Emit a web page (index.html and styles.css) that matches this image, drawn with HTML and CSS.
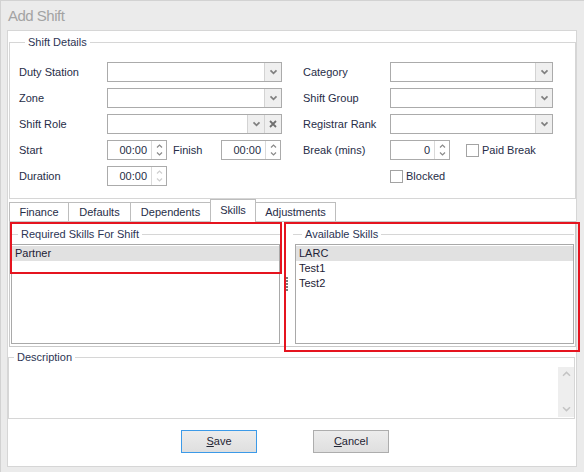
FILE: index.html
```html
<!DOCTYPE html>
<html>
<head>
<meta charset="utf-8">
<title>Add Shift</title>
<link rel="stylesheet" href="styles.css">
</head>
<body>
<div class="window">
  <div class="title">Add Shift</div>
  <div class="panel">
    <fieldset class="details">
      <legend>Shift Details</legend>
      <div class="form">
        <span class="lbl">Duty Station</span>
        <div class="combo"><span class="field"></span><span class="cbtn"><svg width="9" height="6" viewBox="0 0 9 6"><path d="M1.5 1.3L4.5 4.4L7.5 1.3" fill="none" stroke="#808080" stroke-width="1.7"/></svg></span></div>
        <span class="lbl rcol">Category</span>
        <div class="combo"><span class="field"></span><span class="cbtn"><svg width="9" height="6" viewBox="0 0 9 6"><path d="M1.5 1.3L4.5 4.4L7.5 1.3" fill="none" stroke="#808080" stroke-width="1.7"/></svg></span></div>

        <span class="lbl">Zone</span>
        <div class="combo"><span class="field"></span><span class="cbtn"><svg width="9" height="6" viewBox="0 0 9 6"><path d="M1.5 1.3L4.5 4.4L7.5 1.3" fill="none" stroke="#808080" stroke-width="1.7"/></svg></span></div>
        <span class="lbl rcol">Shift Group</span>
        <div class="combo"><span class="field"></span><span class="cbtn"><svg width="9" height="6" viewBox="0 0 9 6"><path d="M1.5 1.3L4.5 4.4L7.5 1.3" fill="none" stroke="#808080" stroke-width="1.7"/></svg></span></div>

        <span class="lbl">Shift Role</span>
        <div class="combo"><span class="field"></span><span class="cbtn"><svg width="9" height="6" viewBox="0 0 9 6"><path d="M1.5 1.3L4.5 4.4L7.5 1.3" fill="none" stroke="#808080" stroke-width="1.7"/></svg></span><span class="cbtn"><svg width="8" height="8" viewBox="0 0 8 8"><path d="M1 1L7 7M7 1L1 7" fill="none" stroke="#707070" stroke-width="1.8"/></svg></span></div>
        <span class="lbl rcol">Registrar Rank</span>
        <div class="combo"><span class="field"></span><span class="cbtn"><svg width="9" height="6" viewBox="0 0 9 6"><path d="M1.5 1.3L4.5 4.4L7.5 1.3" fill="none" stroke="#808080" stroke-width="1.7"/></svg></span></div>

        <span class="lbl">Start</span>
        <div class="pair">
          <div class="spin"><span class="val">00:00</span><span class="arrows"><svg width="7" height="16" viewBox="0 0 7 16"><path d="M1 5.5L3.5 3L6 5.5M1 10.5L3.5 13L6 10.5" fill="none" stroke="#8a8a8a" stroke-width="1.2"/></svg></span></div>
          <span class="lbl finish">Finish</span>
          <div class="spin end"><span class="val">00:00</span><span class="arrows"><svg width="7" height="16" viewBox="0 0 7 16"><path d="M1 5.5L3.5 3L6 5.5M1 10.5L3.5 13L6 10.5" fill="none" stroke="#8a8a8a" stroke-width="1.2"/></svg></span></div>
        </div>
        <span class="lbl rcol">Break (mins)</span>
        <div class="pair">
          <div class="spin"><span class="val">0</span><span class="arrows"><svg width="7" height="16" viewBox="0 0 7 16"><path d="M1 5.5L3.5 3L6 5.5M1 10.5L3.5 13L6 10.5" fill="none" stroke="#8a8a8a" stroke-width="1.2"/></svg></span></div>
          <span class="check paid"></span><span class="lbl chk-text">Paid Break</span>
        </div>

        <span class="lbl">Duration</span>
        <div class="pair">
          <div class="spin"><span class="val">00:00</span><span class="arrows"><svg width="7" height="16" viewBox="0 0 7 16"><path d="M1 5.5L3.5 3L6 5.5M1 10.5L3.5 13L6 10.5" fill="none" stroke="#cfcfcf" stroke-width="1.2"/></svg></span></div>
        </div>
        <div class="pair blocked">
          <span class="check"></span><span class="lbl chk-text">Blocked</span>
        </div>
      </div>
    </fieldset>

    <div class="tabs">
      <span class="tab w-fin">Finance</span>
      <span class="tab w-def">Defaults</span>
      <span class="tab w-dep">Dependents</span>
      <span class="tab w-sk active">Skills</span>
      <span class="tab w-adj">Adjustments</span>
    </div>
    <div class="page">
      <fieldset class="sgroup left">
        <legend>Required Skills For Shift</legend>
        <div class="list">
          <div class="item sel">Partner</div>
        </div>
      </fieldset>
      <div class="splitter"><span class="grip"></span></div>
      <fieldset class="sgroup right">
        <legend>Available Skills</legend>
        <div class="list">
          <div class="item sel">LARC</div>
          <div class="item">Test1</div>
          <div class="item">Test2</div>
        </div>
      </fieldset>
    </div>

    <fieldset class="desc">
      <legend>Description</legend>
      <div class="desc-body">
        <div class="vscroll">
          <svg width="9" height="6" viewBox="0 0 9 6"><path d="M1 4.8L4.5 1.4L8 4.8" fill="none" stroke="#c4c4c4" stroke-width="1.5"/></svg>
          <svg width="9" height="6" viewBox="0 0 9 6"><path d="M1 1.2L4.5 4.6L8 1.2" fill="none" stroke="#c4c4c4" stroke-width="1.5"/></svg>
        </div>
      </div>
    </fieldset>

    <div class="buttons">
      <span class="pbtn save"><u>S</u>ave</span>
      <span class="pbtn"><u>C</u>ancel</span>
    </div>
  </div>

  <div class="mark mark-left"></div>
  <div class="mark mark-right"></div>
</div>
</body>
</html>
```

FILE: styles.css
```css
* { box-sizing: border-box; }
html, body { margin: 0; padding: 0; }
body {
  width: 584px;
  height: 472px;
  overflow: hidden;
  background: #ebebeb;
  font-family: "Liberation Sans", Arial, sans-serif;
  font-size: 11px;
  color: #262d47;
}
.window {
  position: relative;
  width: 584px;
  height: 472px;
  border-top: 1px solid #d2d2d2;
  border-left: 1px solid #d2d2d2;
  background: #ebebeb;
}
.title {
  height: 29px;
  line-height: 30px;
  padding-left: 7px;
  font-size: 15px;
  letter-spacing: -0.5px;
  color: #a3a3a3;
}
.panel {
  margin-left: 6px;
  width: 570px;
  height: 437px;
  background: #fff;
  border: 1px solid #d6d6d6;
}
fieldset {
  margin: 0;
  padding: 0;
  min-width: 0;
  border: 0;
}
legend {
  padding: 0 3px;
  line-height: 14px;
  font-size: 11px;
  color: #2c3554;
}

/* Shift details */
.details {
  margin: 4px 0 0 1px;
  width: 567px;
  border: 1px solid #d6d6d6;
  padding: 13px 0 12px 9px;
}
.details legend { margin-left: 6px; }
.form {
  display: grid;
  grid-template-columns: 88px 175px 21px 87px 163px;
  grid-auto-rows: 20px;
  row-gap: 6px;
  align-items: center;
}
.lbl { white-space: nowrap; }
.rcol { grid-column: 4; }
.blocked { grid-column: 5; }

.combo {
  display: flex;
  height: 20px;
  border: 1px solid #ababab;
  background: #fff;
}
.combo .field { flex: 1; }
.cbtn {
  width: 17px;
  border-left: 1px solid #d3d3d3;
  background: #efefef;
  display: flex;
  align-items: center;
  justify-content: center;
}

.pair {
  display: flex;
  align-items: center;
  height: 20px;
}
.spin {
  display: flex;
  width: 60px;
  height: 20px;
  border: 1px solid #ababab;
  background: #fff;
}
.spin .val {
  flex: 1;
  text-align: right;
  padding-right: 4px;
  line-height: 18px;
  font-size: 11px;
}
.arrows {
  width: 15px;
  border-left: 1px solid #dadada;
  display: flex;
  align-items: center;
  justify-content: center;
}
.finish { margin-left: 6px; }
.spin.end { margin-left: auto; margin-right: 1px; }
.check {
  width: 13px;
  height: 13px;
  border: 1px solid #a3a3a3;
  background: #fff;
  flex: none;
}
.check.paid { margin-left: 16px; }
.chk-text { margin-left: 3px; }

/* Tabs */
.tabs {
  display: flex;
  align-items: flex-end;
  height: 22px;
  margin-left: 1px;
}
.tab {
  height: 19px;
  border: 1px solid #bdbdbd;
  border-bottom: 0;
  margin-left: -1px;
  background: #fff;
  text-align: center;
  line-height: 18px;
  white-space: nowrap;
}
.tab:first-child { margin-left: 0; }
.tab.active {
  height: 23px;
  margin-bottom: -1px;
  line-height: 20px;
  position: relative;
  z-index: 1;
}
.w-fin { width: 60px; }
.w-def { width: 63px; }
.w-dep { width: 81px; }
.w-sk { width: 46px; }
.w-adj { width: 81px; }

.page {
  margin-left: 1px;
  width: 567px;
  height: 126px;
  border: 1px solid #c9c9c9;
  padding: 0 1px;
  display: flex;
}
.sgroup {
  border-top: 1px solid #d6d6d6;
  margin-top: 5px;
  align-self: flex-start;
}
.sgroup.left { width: 269px; }
.sgroup.left legend { margin-left: 7px; }
.sgroup.right { width: 281px; }
.sgroup.right legend { margin-left: 9px; }
.sgroup.right .list { margin-left: 2px; width: 279px; }
.list {
  margin-top: 3px;
  height: 100px;
  padding-top: 1px;
  border: 1px solid #a9a9a9;
  background: #fff;
}
.item {
  height: 15px;
  line-height: 15px;
  padding-left: 3px;
  color: #1d2236;
}
.item.sel { background: #e1e1e1; }
.splitter {
  width: 13px;
  display: flex;
  align-items: center;
  justify-content: center;
}
.grip {
  width: 2px;
  height: 14px;
  background: repeating-linear-gradient(to bottom, #7a7a7a 0, #7a7a7a 2px, transparent 2px, transparent 3px);
}

/* Description */
.desc {
  margin-top: 3px;
  width: 567px;
  border: 1px solid #d6d6d6;
  padding: 3px 0 1px 0;
}
.desc legend { margin-left: 5px; }
.desc-body {
  display: flex;
  justify-content: flex-end;
}
.vscroll {
  width: 16px;
  height: 50px;
  background: #eeeeee;
  display: flex;
  flex-direction: column;
  justify-content: space-between;
  align-items: center;
  padding: 4px 0 5px;
}

/* Buttons */
.buttons {
  display: flex;
  gap: 56px;
  margin-top: 11px;
  padding-left: 173px;
}
.pbtn {
  width: 76px;
  height: 23px;
  border: 1px solid #adadad;
  background: linear-gradient(#ececec, #dfdfdf);
  text-align: center;
  line-height: 21px;
  color: #1f2433;
}
.pbtn.save { border-color: #3c9ae8; }

/* Annotation rectangles */
.mark {
  position: absolute;
  border: 2px solid #e5141f;
  pointer-events: none;
}
.mark-left { left: 9px; top: 221px; width: 272px; height: 52px; }
.mark-right { left: 283px; top: 221px; width: 296px; height: 130px; }
```
